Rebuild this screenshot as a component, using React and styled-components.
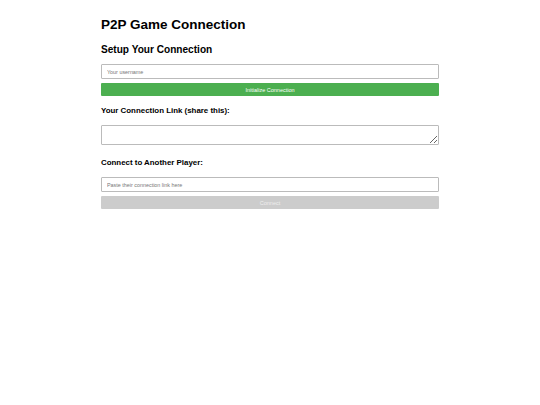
import React from 'react'
import styled, { createGlobalStyle } from 'styled-components'

const GlobalStyle = createGlobalStyle`
    html, body {
        margin: 0;
        padding: 0;
        background: #fff;
    }
    body {
        font-family: 'Liberation Sans', Arial, sans-serif;
        color: #000;
    }
`

const Container = styled.div`
    width: 338px;
    margin: 0 auto;
    padding-top: 16px;
    display: flex;
    flex-direction: column;
`

const Title = styled.h1`
    font-size: 13.5px;
    font-weight: bold;
    margin: 0 0 10px 0;
    line-height: 17px;
`

const Subtitle = styled.h2`
    font-size: 10.1px;
    font-weight: bold;
    margin: 0 0 8px 0;
    line-height: 13px;
`

const Label = styled.h3`
    font-size: 7.9px;
    font-weight: bold;
    margin: ${props => props.top}px 0 ${props => props.bottom}px 0;
    line-height: 10px;
`

const Input = styled.input`
    box-sizing: border-box;
    width: 100%;
    height: 15px;
    padding: 0 5px;
    border: 1px solid #bbb;
    border-radius: 1px;
    font-family: 'Liberation Sans', Arial, sans-serif;
    font-size: 5.4px;
    outline: none;
    &::placeholder {
        color: #777;
    }
`

const TextArea = styled.textarea`
    box-sizing: border-box;
    display: block;
    width: 100%;
    height: 20px;
    padding: 3px 5px;
    border: 1px solid #bbb;
    border-radius: 1px;
    font-family: 'Liberation Sans', Arial, sans-serif;
    font-size: 5.4px;
    resize: vertical;
    outline: none;
`

const Button = styled.button`
    box-sizing: border-box;
    width: 100%;
    height: 13px;
    margin-top: 4px;
    padding: 0;
    border: none;
    border-radius: 1px;
    background: ${props => props.disabled ? '#cccccc' : '#4caf50'};
    color: ${props => props.disabled ? '#eeeeee' : '#fff'};
    font-family: 'Liberation Sans', Arial, sans-serif;
    font-size: 5.5px;
    cursor: ${props => props.disabled ? 'default' : 'pointer'};
`

export default function App(){
    return(
        <>
            <GlobalStyle />
            <Container>
                <Title>P2P Game Connection</Title>
                <Subtitle>Setup Your Connection</Subtitle>
                <Input placeholder="Your username" />
                <Button>Initialize Connection</Button>
                <Label top={10} bottom={9}>Your Connection Link (share this):</Label>
                <TextArea readOnly />
                <Label top={13} bottom={9}>Connect to Another Player:</Label>
                <Input placeholder="Paste their connection link here" />
                <Button disabled>Connect</Button>
            </Container>
        </>
    )
}
